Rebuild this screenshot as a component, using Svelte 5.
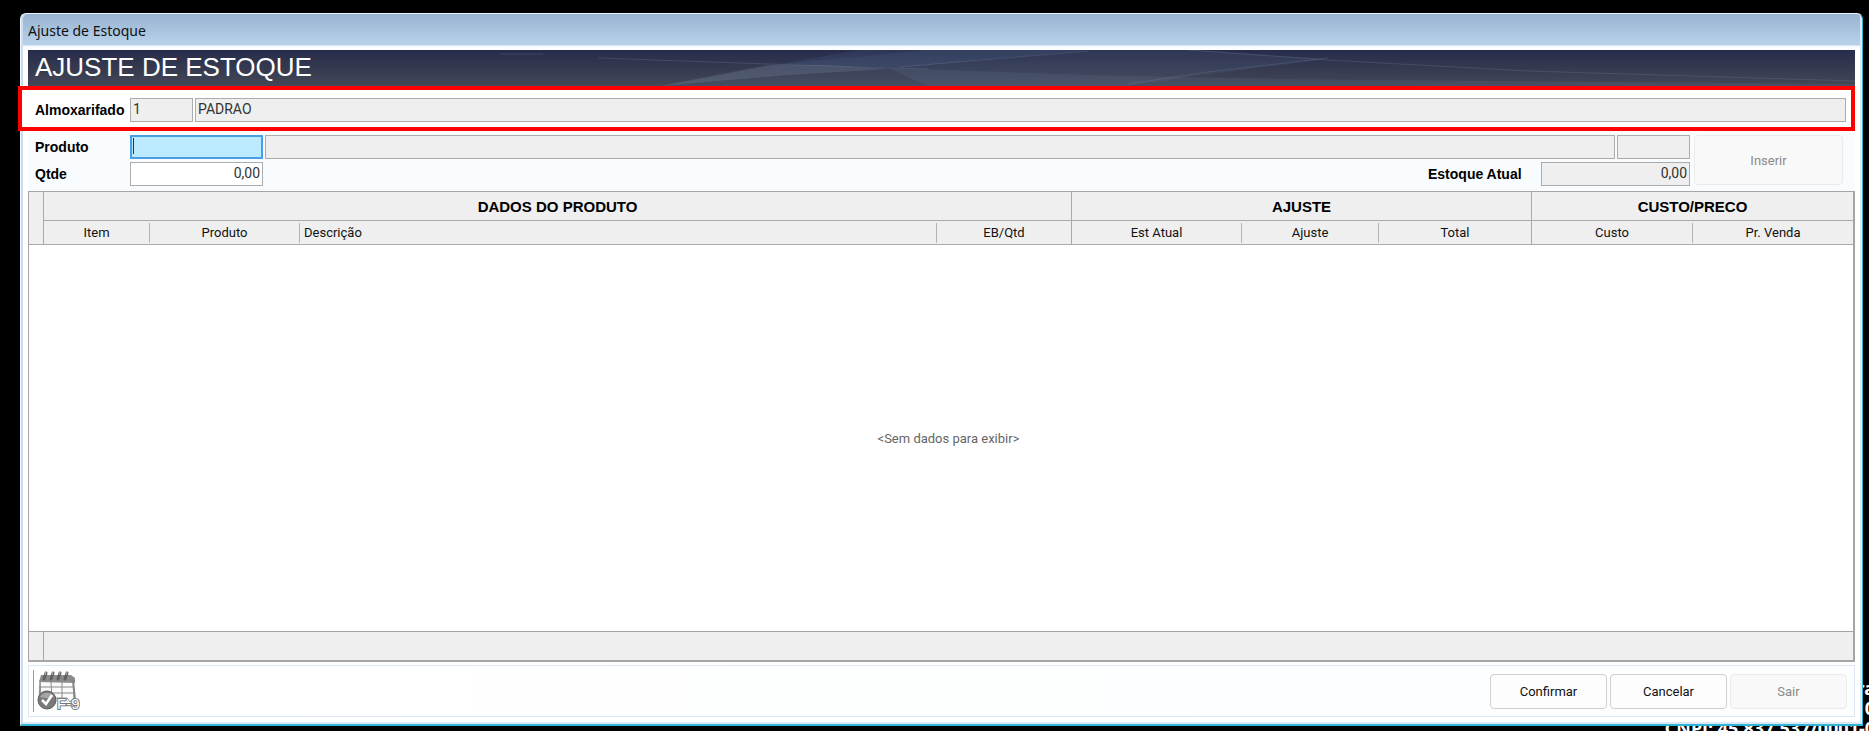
<script>
  let almoxarifado = $state({ codigo: "1", nome: "PADRAO" });
  let produto = $state("");
  let qtde = $state("0,00");
  let estoqueAtual = $state("0,00");

  const bandas = [
    { titulo: "DADOS DO PRODUTO", colunas: 4 },
    { titulo: "AJUSTE", colunas: 3 },
    { titulo: "CUSTO/PRECO", colunas: 2 },
  ];

  const colunas = [
    { titulo: "Item", classe: "c-item" },
    { titulo: "Produto", classe: "c-produto" },
    { titulo: "Descrição", classe: "c-descricao" },
    { titulo: "EB/Qtd", classe: "c-qtd", fim: true },
    { titulo: "Est Atual", classe: "c-atual" },
    { titulo: "Ajuste", classe: "c-ajuste" },
    { titulo: "Total", classe: "c-total", fim: true },
    { titulo: "Custo", classe: "c-custo" },
    { titulo: "Pr. Venda", classe: "c-venda", fim: true },
  ];
</script>

<main class="desktop">
  <div class="wallpaper-text">
    <span>ra</span>
    <span>0</span>
    <span>CNPJ: 45.837.537/0001-0</span>
  </div>

  <div class="window">
    <div class="title-bar">Ajuste de Estoque</div>
    <div class="content">
      <header class="banner">
        <svg class="rays" viewBox="0 0 1827 36" preserveAspectRatio="none" aria-hidden="true">
          <path d="M632 36 L752 14 L900 0 H1170 L1300 9 L1170 26 L1100 36 Z" fill="#5a7094" opacity=".16" />
          <path d="M632 36 L740 15 L800 15 L860 19 L760 25 Z" fill="#8fa0b5" opacity=".2" />
          <path d="M752 14 L830 0 H1060 L880 17 Z" fill="#4d6c9c" opacity=".18" />
          <path d="M860 18 L1060 25 L1250 29 L1827 34 V36 H900 Z" fill="#62758f" opacity=".2" />
          <path d="M472 4 H515 M570 8 L740 14 L900 19 M872 17 L1060 1 M1100 34 L1180 22 L1300 8 M1160 0 L1300 10 L1500 21 L1827 31" fill="none" stroke="#8795ad" opacity=".22" />
        </svg>
        <h1>AJUSTE DE ESTOQUE</h1>
      </header>

      <form class="form" onsubmit={(e) => e.preventDefault()}>
        <div class="row highlight">
          <label for="almoxarifado">Almoxarifado</label>
          <input id="almoxarifado" class="code" value={almoxarifado.codigo} readonly />
          <input class="grow" aria-label="Nome do almoxarifado" value={almoxarifado.nome} readonly />
        </div>
        <div class="entry">
          <div class="lines">
            <div class="row">
              <label for="produto">Produto</label>
              <div class="focus-box">
                <input id="produto" class="short active" bind:value={produto} />
                <span class="caret"></span>
              </div>
              <input class="grow" aria-label="Descrição do produto" readonly />
              <input class="unit" aria-label="Unidade" readonly />
            </div>
            <div class="row">
              <label for="qtde">Qtde</label>
              <input id="qtde" class="short number" bind:value={qtde} />
              <label class="stock-label" for="estoque">Estoque Atual</label>
              <input id="estoque" class="stock number" value={estoqueAtual} readonly />
            </div>
          </div>
          <button type="submit" class="insert" disabled>Inserir</button>
        </div>
      </form>

      <div class="grid">
        <table>
          <colgroup>
            <col class="c-mark" />
            {#each colunas as coluna}
              <col class={coluna.classe} />
            {/each}
          </colgroup>
          <thead>
            <tr class="bands">
              <td class="mark" rowspan="2"></td>
              {#each bandas as banda}
                <th colspan={banda.colunas}>{banda.titulo}</th>
              {/each}
            </tr>
            <tr class="columns">
              {#each colunas as coluna}
                <th class={{ end: coluna.fim, left: coluna.classe === "c-descricao" }}>
                  <span>{coluna.titulo}</span>
                </th>
              {/each}
            </tr>
          </thead>
        </table>
        <p class="empty">&lt;Sem dados para exibir&gt;</p>
        <div class="summary"><span></span></div>
      </div>

      <footer class="actions">
        <div class="shortcut">
          <svg viewBox="0 0 44 42" role="img" aria-label="F-9">
            <path d="M4 10 H37 L38 29 L34 32 L31 28 H5 Z" fill="#fafafa" stroke="#909090" />
            <path d="M3 12 L5 5 H35 L39 8 V13 Z" fill="#8b8b8b" />
            <path d="M37 10 L39 30" stroke="#858585" stroke-width="2" />
            <path d="M3 17 H37 M3 23 H37 M15 12 L16 30 M26 12 V28 M4 12 L3 29" fill="none" stroke="#8a8a8a" />
            <path d="M8 9 L10 3 M15 9 L17 3 M22 9 L24 3 M29 9 L31 3" stroke="#606060" stroke-width="3" stroke-linecap="round" />
            <path d="M9 5 L10 2 M16 5 L17 2 M23 5 L24 2 M30 5 L31 2" stroke="#bbb" />
            <circle cx="11" cy="30" r="9" fill="#7a7a7a" stroke="#5a5a5a" />
            <path d="M4 27 A8 8 0 0 1 18 27 Q11 29 4 27" fill="#a5a5a5" />
            <path d="M6 30 L10 34 L16 25" fill="none" stroke="#fff" stroke-width="2.5" />
            <text x="21" y="39">F-9</text>
          </svg>
        </div>
        <button type="button">Confirmar</button>
        <button type="button">Cancelar</button>
        <button type="button" disabled>Sair</button>
      </footer>
    </div>
  </div>
</main>

<style>
  :global(body) {
    margin: 0;
    background: #000;
  }
  .desktop {
    position: relative;
    box-sizing: border-box;
    display: flex;
    min-height: 100vh;
    padding: 13px 6px 5px 20px;
    overflow: hidden;
    background: #000;
    color: #111;
    font-family: Roboto, "Liberation Sans", sans-serif;
    font-size: 14px;
  }
  .wallpaper-text {
    position: absolute;
    right: -6px;
    bottom: -7px;
    display: flex;
    flex-direction: column;
    align-items: flex-end;
    color: #fff;
    font: 700 18px/20px "Noto Sans", sans-serif;
  }
  .window {
    position: relative;
    box-sizing: border-box;
    flex: 1;
    display: flex;
    flex-direction: column;
    min-width: 0;
    padding: 0 7px;
    border: 1px solid #eef5fc;
    border-right-color: #30b5d4;
    border-bottom: 2px solid #30b5d4;
    border-radius: 6px 6px 0 0;
    background: linear-gradient(#98b3d0, #b9d2ec 31px, #f4f9ff 32px, #fff 36px);
    box-shadow:
      inset 2px 0 0 #cbdcf0,
      inset -2px -2px 0 #dce8f6;
  }
  .title-bar {
    height: 36px;
    font: 14px/34px "Noto Sans", sans-serif;
  }
  .content {
    flex: 1;
    display: flex;
    flex-direction: column;
    padding-bottom: 7px;
  }
  .banner {
    position: relative;
    height: 36px;
    background: linear-gradient(#272c4a, #434756);
  }
  .rays {
    position: absolute;
    width: 100%;
    height: 100%;
  }
  h1 {
    position: relative;
    margin: 0;
    padding-left: 7px;
    color: #fff;
    font: 26px/34px "Liberation Sans", sans-serif;
  }
  .form {
    background: linear-gradient(#fff, #f8fcff 50px);
  }
  .row {
    display: flex;
    align-items: center;
    gap: 2px;
  }
  .highlight {
    position: relative;
    margin: 0 0 4px -10px;
    padding: 8px 5px 5px 13px;
    border: 4px solid #f00;
    background: #fff;
  }
  label {
    width: 93px;
    color: #000;
    font: 700 14px "Liberation Sans", sans-serif;
  }
  input {
    box-sizing: border-box;
    width: 100%;
    height: 24px;
    padding: 0 2px 3px;
    border: 1px solid #acacac;
    border-radius: 0;
    outline: none;
    background: #fff;
    color: #333;
    font: inherit;
  }
  input:read-only {
    background: #efefef;
  }
  .code {
    width: 63px;
  }
  .grow {
    flex: 1;
  }
  .short {
    width: 133px;
  }
  .active {
    border: 2px solid #4a9fe4;
    background: #bcebff;
  }
  .focus-box {
    position: relative;
    display: flex;
  }
  .caret {
    position: absolute;
    top: 3px;
    left: 3px;
    width: 1px;
    height: 16px;
    background: #333;
  }
  .unit {
    width: 73px;
  }
  .number {
    text-align: right;
  }
  .stock-label {
    width: 111px;
    margin-left: auto;
  }
  .stock {
    width: 149px;
  }
  .entry {
    display: flex;
    gap: 4px;
    padding: 0 12px 5px 7px;
  }
  .lines {
    flex: 1;
    display: flex;
    flex-direction: column;
    gap: 3px;
  }
  button {
    box-sizing: border-box;
    width: 117px;
    height: 35px;
    padding: 0;
    border: 1px solid #cfcfcf;
    border-radius: 4px;
    background: #fdfdfd;
    color: #111;
    font: 13px Roboto, sans-serif;
  }
  button:disabled {
    border-color: #ebebeb;
    background: #f9f9f9;
    color: #8a8a8a;
  }
  .insert {
    width: 149px;
    height: 50px;
  }
  .grid {
    flex: 1;
    display: flex;
    flex-direction: column;
    border: 1px solid #a5a5a5;
    border-right-width: 2px;
    border-bottom-width: 2px;
    background: #fff;
  }
  table {
    width: 100%;
    table-layout: fixed;
    border-collapse: separate;
    border-spacing: 0;
    background: #efefef;
  }
  th,
  td {
    box-sizing: border-box;
    padding: 0;
    border-bottom: 1px solid #a9a9a9;
    font-weight: 400;
  }
  .mark {
    border-right: 1px solid #a9a9a9;
  }
  .bands th {
    height: 29px;
    border-right: 1px solid #a9a9a9;
    color: #000;
    font: 700 15px "Liberation Sans", sans-serif;
  }
  .columns th {
    height: 24px;
    font-size: 13px;
  }
  .columns span {
    display: block;
    border-right: 1px solid #b5b5b5;
    line-height: 20px;
  }
  .columns .end span {
    border-right: 0;
  }
  .columns .end {
    border-right: 1px solid #a9a9a9;
  }
  .bands th:last-child,
  .columns th:last-child {
    border-right: 0;
  }
  .columns .left {
    padding-left: 4px;
    text-align: left;
  }
  .c-mark {
    width: 15px;
  }
  .c-item {
    width: 106px;
  }
  .c-produto {
    width: 150px;
  }
  .c-qtd {
    width: 135px;
  }
  .c-atual {
    width: 170px;
  }
  .c-ajuste {
    width: 137px;
  }
  .c-total {
    width: 153px;
  }
  .c-custo {
    width: 161px;
  }
  .c-venda {
    width: 160px;
  }
  .empty {
    flex: 1;
    display: flex;
    align-items: center;
    justify-content: center;
    margin: 0;
    padding-left: 15px;
    color: #666;
    font-size: 13px;
  }
  .summary {
    display: flex;
    height: 28px;
    border-top: 1px solid #a5a5a5;
    background: #efefef;
  }
  .summary span {
    width: 14px;
    border-right: 1px solid #a5a5a5;
  }
  .actions {
    display: flex;
    align-items: center;
    gap: 3px;
    height: 50px;
    margin-top: 3px;
    padding: 0 7px 0 4px;
    border: 1px solid #dce7f3;
    background: linear-gradient(90deg, #fff, #fcfeff);
  }
  .shortcut {
    flex: 1;
    display: flex;
    border-left: 1px solid #999;
    padding-left: 2px;
  }
  .shortcut svg {
    width: 44px;
    height: 42px;
  }
  .shortcut text {
    fill: #fff;
    stroke: #777;
    stroke-width: 2px;
    paint-order: stroke;
    font: 15px "Liberation Sans", sans-serif;
  }
</style>
